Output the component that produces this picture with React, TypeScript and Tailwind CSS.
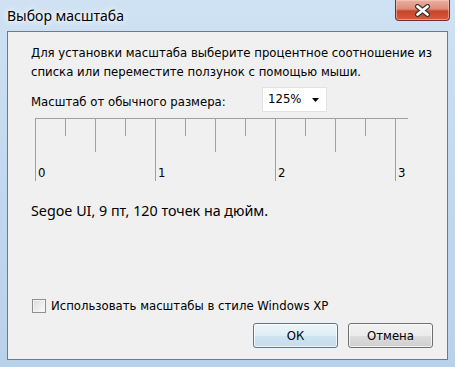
import React from "react";

const ui = "font-['DejaVu_Sans_Condensed','DejaVu_Sans',sans-serif] text-[13px] text-black";

const medium = [2, 6, 10];

function Ruler() {
  // 13 ticks, 30px apart; every 4th is a major tick with a label
  const ticks = Array.from({ length: 12 }, (_, i) => i);
  return (
    <div className="ml-[4px] mt-[6px] w-[373px] h-[63px] border-t border-[#a0a0a0] flex">
      {ticks.map((i) => {
        const isMajor = i % 4 === 0;
        const h = isMajor ? "h-[62px]" : medium.includes(i) ? "h-[33px]" : "h-[17px]";
        return (
          <div key={i} className="w-[30px] h-[62px] flex">
            <div className={`w-px ${h} bg-[#a0a0a0]`} />
            {isMajor && (
              <span className={`${ui} self-end ml-[2px] leading-[15px] mb-[1px]`}>{i / 4}</span>
            )}
          </div>
        );
      })}
      <div className="h-[62px] flex">
        <div className="w-px h-[62px] bg-[#a0a0a0]" />
        <span className={`${ui} self-end ml-[2px] leading-[15px] mb-[1px]`}>3</span>
      </div>
    </div>
  );
}

export default function App() {
  return (
    <div className="w-[455px] h-[367px] overflow-hidden flex flex-col bg-[linear-gradient(180deg,#cfe2f4_0%,#c2d9ef_45%,#b9d2ea_100%)]">
      {/* Title bar */}
      <div className="h-[31px] shrink-0 flex items-start justify-between">
        <div className="pl-[7px] pt-[6px] font-['Noto_Sans',sans-serif] text-[14px] leading-[20px] text-black [text-shadow:0_0_8px_#ffffff,0_0_4px_#ffffff]">
          Выбор масштаба
        </div>
        <button className="mr-[5px] w-[55px] h-[21px] rounded-b-[4px] border border-t-0 border-[#6e3328] bg-[linear-gradient(180deg,#eab0a1_0%,#de8d79_45%,#c8452a_55%,#d85a3c_100%)] shadow-[inset_0_0_0_1px_rgba(255,210,200,0.5)] flex items-center justify-center">
          <svg width="17" height="13" viewBox="0 0 17 13">
            <path d="M3.5 2.5 L13.5 10.5 M13.5 2.5 L3.5 10.5" stroke="#3a3230" strokeWidth="5" strokeLinecap="round" />
            <path d="M3.5 2.5 L13.5 10.5 M13.5 2.5 L3.5 10.5" stroke="#ffffff" strokeWidth="2.8" strokeLinecap="round" />
          </svg>
        </button>
      </div>

      {/* Client area */}
      <div className="mx-[7px] h-[329px] shrink-0 border border-[#6c7b8b] bg-[#f0f0f0] flex flex-col pl-[23px] pr-[14px] pt-[11px] pb-[11px]">
        <p className={`${ui} leading-[19px]`}>
          Для установки масштаба выберите процентное соотношение из
          <br />
          списка или переместите ползунок с помощью мыши.
        </p>

        {/* Scale row */}
        <div className="flex items-start mt-[6px]">
          <span className={`${ui} w-[231px] leading-[17px] pt-[6px]`}>Масштаб от обычного размера:</span>
          <div className="w-[65px] h-[25px] bg-white border border-[#e2e2e2] flex items-center justify-between pl-[5px] pr-[7px]">
            <span className={`${ui} leading-[17px] -mt-[2px]`}>125%</span>
            <svg width="7" height="4" viewBox="0 0 7 4">
              <path d="M0 0 H7 L3.5 4 Z" fill="#000" />
            </svg>
          </div>
        </div>

        <Ruler />

        <div className="mt-[20px] font-['Noto_Sans',sans-serif] text-[14.3px] leading-[20px] text-black">
          Segoe UI, 9 пт, 120 точек на дюйм.
        </div>

        {/* Bottom */}
        <div className="mt-auto flex flex-col">
          <label className="flex items-center gap-[5px] ml-[1px]">
            <span className="w-[14px] h-[14px] border border-[#8e8f8f] bg-[linear-gradient(135deg,#dcdcdc,#fbfbfb)] shadow-[inset_0_0_0_1px_#f4f4f4]" />
            <span className={`${ui} leading-[17px]`}>Использовать масштабы в стиле Windows XP</span>
          </label>
          <div className="flex justify-end gap-[10px] mt-[9px]">
            <button className={`${ui} w-[85px] h-[25px] rounded-[3px] border border-[#3c7fb1] bg-[linear-gradient(180deg,#edf5fa_0%,#dfedf6_50%,#cfe4f1_51%,#c4ddec_100%)] shadow-[inset_0_0_0_1px_rgba(255,255,255,0.7)]`}>
              ОК
            </button>
            <button className={`${ui} w-[85px] h-[25px] rounded-[3px] border border-[#707070] bg-[linear-gradient(180deg,#f2f2f2_0%,#ebebeb_50%,#dddddd_51%,#cfcfcf_100%)] shadow-[inset_0_0_0_1px_rgba(255,255,255,0.7)]`}>
              Отмена
            </button>
          </div>
        </div>
      </div>
    </div>
  );
}
